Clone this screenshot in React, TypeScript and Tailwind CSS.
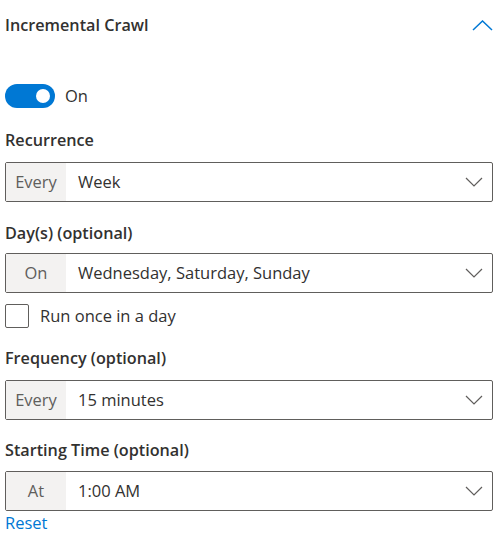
import React from "react";

const font = { fontFamily: '"Open Sans", "Noto Sans", Arial, sans-serif' };

function ChevronDown() {
  return (
    <svg width="18" height="10" viewBox="0 0 18 10" fill="none">
      <path d="M1 1 L9 9 L17 1" stroke="#605e5c" strokeWidth="1.2" />
    </svg>
  );
}

function ChevronUp() {
  return (
    <svg width="21" height="11" viewBox="0 0 21 11" fill="none">
      <path d="M1 10 L10.5 1 L20 10" stroke="#0078d4" strokeWidth="1.5" />
    </svg>
  );
}

function PrefixedDropdown({ prefix, value }: { prefix: string; value: string }) {
  return (
    <div className="flex h-[40px] w-full items-stretch rounded-[2px] border border-[#605e5c] bg-white">
      <div className="flex w-[60px] shrink-0 items-center justify-center bg-[#f3f2f1] text-[16.5px] text-[#605e5c]">
        {prefix}
      </div>
      <div className="flex flex-1 items-center justify-between pl-[12px] pr-[9px] text-[16.5px] text-[#323130]">
        <span>{value}</span>
        <ChevronDown />
      </div>
    </div>
  );
}

function Label({ children }: { children: React.ReactNode }) {
  return <div className="h-[24px] text-[16.2px] font-semibold leading-[24px] text-[#323130]">{children}</div>;
}

export default function App() {
  return (
    <div className="w-[498px] bg-white px-[5px] text-[#323130]" style={font}>
      <div className="flex h-[50px] items-center justify-between">
        <div className="text-[16.2px] font-semibold text-[#323130]">Incremental Crawl</div>
        <ChevronUp />
      </div>

      <div className="mt-[34px] flex h-[24px] items-center gap-[10px]">
        <div className="flex h-[24px] w-[50px] items-center justify-end rounded-full bg-[#0078d4] pr-[5px]">
          <div className="h-[14px] w-[14px] rounded-full bg-white" />
        </div>
        <span className="text-[16.5px] text-[#323130]">On</span>
      </div>

      <div className="mt-[20px]">
        <Label>Recurrence</Label>
      </div>
      <div className="mt-[10px]">
        <PrefixedDropdown prefix="Every" value="Week" />
      </div>

      <div className="mt-[19px]">
        <Label>Day(s) (optional)</Label>
      </div>
      <div className="mt-[8px]">
        <PrefixedDropdown prefix="On" value="Wednesday, Saturday, Sunday" />
      </div>

      <div className="mt-[11px] flex h-[24px] items-center gap-[11px]">
        <div className="h-[24px] w-[24px] rounded-[2px] border border-[#605e5c] bg-white" />
        <span className="text-[16.5px] text-[#323130]">Run once in a day</span>
      </div>

      <div className="mt-[18px]">
        <Label>Frequency (optional)</Label>
      </div>
      <div className="mt-[10px]">
        <PrefixedDropdown prefix="Every" value="15 minutes" />
      </div>

      <div className="mt-[18px]">
        <Label>Starting Time (optional)</Label>
      </div>
      <div className="mt-[9px]">
        <PrefixedDropdown prefix="At" value="1:00 AM" />
      </div>

      <div className="h-[24px] text-[16.5px] leading-[24px] text-[#0078d4]">Reset</div>
    </div>
  );
}
